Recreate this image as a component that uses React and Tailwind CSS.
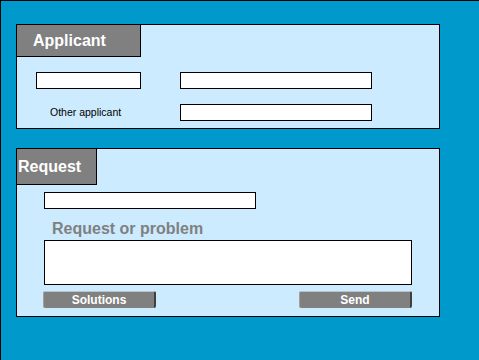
export default function App() {
  const font = { fontFamily: '"Liberation Sans", Arial, sans-serif' };

  return (
    <div
      className="w-[479px] h-[360px] bg-[#0099cc] border-t border-l border-black pl-[15px] pt-[23px] box-border"
      style={font}
    >
      {/* Applicant panel */}
      <div className="w-[424px] h-[105px] border border-black bg-[#ccebff] box-border">
        <div className="w-[124px] h-[32px] bg-[#808080] border-r border-b border-black flex items-center pl-[16px] text-white text-[16px] font-bold">
          Applicant
        </div>
        <div className="mt-[15px] ml-[19px] flex">
          <input className="w-[105px] h-[17px] border border-black bg-white outline-none" />
          <input className="ml-[39px] w-[192px] h-[17px] border border-black bg-white outline-none" />
        </div>
        <div className="mt-[15px] ml-[19px] flex items-center">
          <div className="w-[105px] pl-[14px] text-[10.5px] text-black leading-[17px]">
            Other applicant
          </div>
          <input className="ml-[39px] w-[192px] h-[17px] border border-black bg-white outline-none" />
        </div>
      </div>

      {/* Request panel */}
      <div className="mt-[19px] w-[424px] h-[169px] border border-black bg-[#ccebff] box-border">
        <div className="w-[80px] h-[36px] bg-[#808080] border-r border-b border-black flex items-center pl-[1px] text-white text-[16px] font-bold">
          Request
        </div>
        <input className="block mt-[7px] ml-[27px] w-[212px] h-[17px] border border-black bg-white outline-none" />
        <div className="mt-[11px] ml-[35px] leading-[18px] text-[16px] font-bold text-[#808080]">
          Request or problem
        </div>
        <textarea className="block mt-[2px] ml-[27px] w-[368px] h-[45px] border border-black bg-white outline-none resize-none" />
        <div className="mt-[6px] ml-[26px] w-[369px] flex justify-between">
          <button className="w-[113px] h-[17px] bg-[#808080] border-t border-l border-t-[#b8c4cc] border-l-[#a0a0a0] border-r-2 border-r-[#404040] rounded-[2px] text-white text-[12px] font-bold leading-[14px]">
            Solutions
          </button>
          <button className="w-[113px] h-[17px] bg-[#808080] border-t border-l border-t-[#b8c4cc] border-l-[#a0a0a0] border-r-2 border-r-[#404040] rounded-[2px] text-white text-[12px] font-bold leading-[14px]">
            Send
          </button>
        </div>
      </div>
    </div>
  );
}
